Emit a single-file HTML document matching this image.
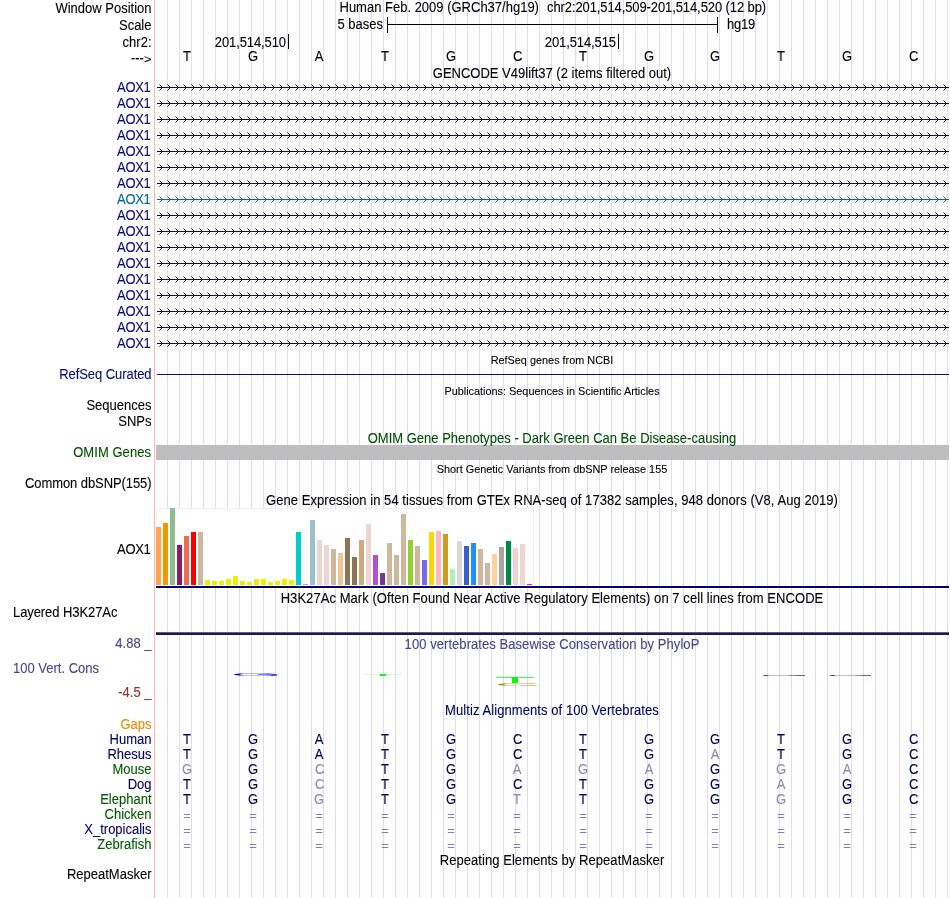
<!DOCTYPE html><html><head><meta charset="utf-8"><title>UCSC Genome Browser - chr2:201,514,509-201,514,520</title>
<style>
html,body{margin:0;padding:0;background:#fff;}
body{-webkit-text-stroke:0.1px;width:950px;height:898px;overflow:hidden;position:relative;font-family:"Liberation Sans",sans-serif;font-size:13px;color:#000;}
#g{position:absolute;left:0;top:0;}
.t{position:absolute;white-space:pre;line-height:16px;height:16px;transform:scaleY(1.07);transform-origin:0 12.5px;}
.r{text-align:right;left:0;width:151.5px;}
.c{text-align:center;left:155px;width:794px;}
.s{font-size:10.88px;transform-origin:0 11.8px;}
.nv{color:#0c0c78;}
.gr{color:#006400;}
.b{transform:scaleY(1.07);transform-origin:0 12.5px;position:absolute;width:20px;margin-left:-10px;text-align:center;line-height:15px;height:15px;white-space:pre;}
</style></head><body>
<svg id="g" width="950" height="898" viewBox="0 0 950 898" shape-rendering="crispEdges">
<defs>
<pattern id="cv" x="154" y="84" width="8" height="16" patternUnits="userSpaceOnUse"><g fill="#0c0c78"><rect x="5" y="0" width="1" height="1" opacity=".55"/><rect x="6" y="1" width="1" height="1"/><rect x="7" y="2" width="1" height="1"/><rect x="7" y="4" width="1" height="1"/><rect x="6" y="5" width="1" height="1"/><rect x="5" y="6" width="1" height="1" opacity=".55"/></g></pattern>
<pattern id="cv2" x="154" y="84" width="8" height="16" patternUnits="userSpaceOnUse"><g fill="#0764a8"><rect x="5" y="0" width="1" height="1" opacity=".55"/><rect x="6" y="1" width="1" height="1"/><rect x="7" y="2" width="1" height="1"/><rect x="7" y="4" width="1" height="1"/><rect x="6" y="5" width="1" height="1"/><rect x="5" y="6" width="1" height="1" opacity=".55"/></g></pattern>
</defs>
<path d="M167.5 0V898M179.5 0V898M191.5 0V898M203.5 0V898M215.5 0V898M227.5 0V898M239.5 0V898M251.5 0V898M263.5 0V898M275.5 0V898M287.5 0V898M299.5 0V898M311.5 0V898M323.5 0V898M335.5 0V898M347.5 0V898M359.5 0V898M371.5 0V898M383.5 0V898M395.5 0V898M407.5 0V898M419.5 0V898M431.5 0V898M443.5 0V898M455.5 0V898M467.5 0V898M479.5 0V898M491.5 0V898M503.5 0V898M515.5 0V898M527.5 0V898M539.5 0V898M551.5 0V898M563.5 0V898M575.5 0V898M587.5 0V898M599.5 0V898M611.5 0V898M623.5 0V898M635.5 0V898M647.5 0V898M659.5 0V898M671.5 0V898M683.5 0V898M695.5 0V898M707.5 0V898M719.5 0V898M731.5 0V898M743.5 0V898M755.5 0V898M767.5 0V898M779.5 0V898M791.5 0V898M803.5 0V898M815.5 0V898M827.5 0V898M839.5 0V898M851.5 0V898M863.5 0V898M875.5 0V898M887.5 0V898M899.5 0V898M911.5 0V898M923.5 0V898M935.5 0V898M947.5 0V898" stroke="#dcdcff" stroke-width="1" fill="none"/>
<rect x="154" y="0" width="1" height="898" fill="#ffb4b4"/>
<path d="M387.5 17V33M717.5 17V33M387 24.5H718" stroke="#000" stroke-width="1" fill="none"/>
<path d="M288.5 34V49M618.5 34V49" stroke="#000" stroke-width="1" fill="none"/>
<rect x="157" y="87" width="792" height="1" fill="#0c0c78"/>
<rect x="157" y="84" width="792" height="7" fill="url(#cv)" transform="translate(0,0)"/>
<rect x="157" y="103" width="792" height="1" fill="#0c0c78"/>
<rect x="157" y="100" width="792" height="7" fill="url(#cv)" transform="translate(0,0)"/>
<rect x="157" y="119" width="792" height="1" fill="#0c0c78"/>
<rect x="157" y="116" width="792" height="7" fill="url(#cv)" transform="translate(0,0)"/>
<rect x="157" y="135" width="792" height="1" fill="#0c0c78"/>
<rect x="157" y="132" width="792" height="7" fill="url(#cv)" transform="translate(0,0)"/>
<rect x="157" y="151" width="792" height="1" fill="#0c0c78"/>
<rect x="157" y="148" width="792" height="7" fill="url(#cv)" transform="translate(0,0)"/>
<rect x="157" y="167" width="792" height="1" fill="#0c0c78"/>
<rect x="157" y="164" width="792" height="7" fill="url(#cv)" transform="translate(0,0)"/>
<rect x="157" y="183" width="792" height="1" fill="#0c0c78"/>
<rect x="157" y="180" width="792" height="7" fill="url(#cv)" transform="translate(0,0)"/>
<rect x="157" y="199" width="792" height="1" fill="#0764a8"/>
<rect x="157" y="196" width="792" height="7" fill="url(#cv2)" transform="translate(0,0)"/>
<rect x="157" y="215" width="792" height="1" fill="#0c0c78"/>
<rect x="157" y="212" width="792" height="7" fill="url(#cv)" transform="translate(0,0)"/>
<rect x="157" y="231" width="792" height="1" fill="#0c0c78"/>
<rect x="157" y="228" width="792" height="7" fill="url(#cv)" transform="translate(0,0)"/>
<rect x="157" y="247" width="792" height="1" fill="#0c0c78"/>
<rect x="157" y="244" width="792" height="7" fill="url(#cv)" transform="translate(0,0)"/>
<rect x="157" y="263" width="792" height="1" fill="#0c0c78"/>
<rect x="157" y="260" width="792" height="7" fill="url(#cv)" transform="translate(0,0)"/>
<rect x="157" y="279" width="792" height="1" fill="#0c0c78"/>
<rect x="157" y="276" width="792" height="7" fill="url(#cv)" transform="translate(0,0)"/>
<rect x="157" y="295" width="792" height="1" fill="#0c0c78"/>
<rect x="157" y="292" width="792" height="7" fill="url(#cv)" transform="translate(0,0)"/>
<rect x="157" y="311" width="792" height="1" fill="#0c0c78"/>
<rect x="157" y="308" width="792" height="7" fill="url(#cv)" transform="translate(0,0)"/>
<rect x="157" y="327" width="792" height="1" fill="#0c0c78"/>
<rect x="157" y="324" width="792" height="7" fill="url(#cv)" transform="translate(0,0)"/>
<rect x="157" y="343" width="792" height="1" fill="#0c0c78"/>
<rect x="157" y="340" width="792" height="7" fill="url(#cv)" transform="translate(0,0)"/>
<rect x="157" y="374" width="792" height="1" fill="#0c0c78"/>
<rect x="156" y="445" width="793" height="15" fill="#bebebe"/>
<rect x="156" y="508" width="378" height="78" fill="#fff"/>
<path d="M156.5 585V508.5H533.5V585" stroke="#f0f0f0" stroke-width="1" fill="none"/>
<rect x="156" y="527" width="5" height="58" fill="#FFA54F"/>
<rect x="163" y="523" width="5" height="62" fill="#EE9A00"/>
<rect x="170" y="508" width="5" height="77" fill="#8FBC8F"/>
<rect x="177" y="545" width="5" height="40" fill="#8B1C62"/>
<rect x="184" y="536" width="5" height="49" fill="#EE6A50"/>
<rect x="191" y="532" width="5" height="53" fill="#FF0000"/>
<rect x="198" y="532" width="5" height="53" fill="#CDB79E"/>
<rect x="205" y="580" width="5" height="5" fill="#EEEE00"/>
<rect x="212" y="581" width="5" height="4" fill="#EEEE00"/>
<rect x="219" y="581" width="5" height="4" fill="#EEEE00"/>
<rect x="226" y="579" width="5" height="6" fill="#EEEE00"/>
<rect x="233" y="576" width="5" height="9" fill="#EEEE00"/>
<rect x="240" y="581" width="5" height="4" fill="#EEEE00"/>
<rect x="247" y="582" width="5" height="3" fill="#EEEE00"/>
<rect x="254" y="579" width="5" height="6" fill="#EEEE00"/>
<rect x="261" y="579" width="5" height="6" fill="#EEEE00"/>
<rect x="268" y="582" width="5" height="3" fill="#EEEE00"/>
<rect x="275" y="581" width="5" height="4" fill="#EEEE00"/>
<rect x="282" y="579" width="5" height="6" fill="#EEEE00"/>
<rect x="289" y="580" width="5" height="5" fill="#EEEE00"/>
<rect x="296" y="532" width="5" height="53" fill="#00CDCD"/>
<rect x="303" y="584" width="5" height="1" fill="#EE82EE"/>
<rect x="310" y="520" width="5" height="65" fill="#9AC0CD"/>
<rect x="317" y="540" width="5" height="45" fill="#EED5D2"/>
<rect x="324" y="545" width="5" height="40" fill="#EED5D2"/>
<rect x="331" y="549" width="5" height="36" fill="#CDB79E"/>
<rect x="338" y="553" width="5" height="32" fill="#EEC591"/>
<rect x="345" y="538" width="5" height="47" fill="#8B7355"/>
<rect x="352" y="557" width="5" height="28" fill="#8B7355"/>
<rect x="359" y="540" width="5" height="45" fill="#CDAA7D"/>
<rect x="366" y="524" width="5" height="61" fill="#EED5D2"/>
<rect x="373" y="555" width="5" height="30" fill="#B452CD"/>
<rect x="380" y="573" width="5" height="12" fill="#7A378B"/>
<rect x="387" y="543" width="5" height="42" fill="#CDB79E"/>
<rect x="394" y="555" width="5" height="30" fill="#CDB79E"/>
<rect x="401" y="514" width="5" height="71" fill="#CDB79E"/>
<rect x="408" y="540" width="5" height="45" fill="#9ACD32"/>
<rect x="415" y="546" width="5" height="39" fill="#CDB79E"/>
<rect x="422" y="560" width="5" height="25" fill="#7A67EE"/>
<rect x="429" y="532" width="5" height="53" fill="#FFD700"/>
<rect x="436" y="531" width="5" height="54" fill="#FFB6C1"/>
<rect x="443" y="534" width="5" height="51" fill="#CD9B1D"/>
<rect x="450" y="569" width="5" height="16" fill="#B4EEB4"/>
<rect x="457" y="541" width="5" height="44" fill="#D9D9D9"/>
<rect x="464" y="546" width="5" height="39" fill="#3A5FCD"/>
<rect x="471" y="543" width="5" height="42" fill="#1E90FF"/>
<rect x="478" y="549" width="5" height="36" fill="#CDB79E"/>
<rect x="485" y="563" width="5" height="22" fill="#CDB79E"/>
<rect x="492" y="554" width="5" height="31" fill="#FFD39B"/>
<rect x="499" y="547" width="5" height="38" fill="#A6A6A6"/>
<rect x="506" y="541" width="5" height="44" fill="#008B45"/>
<rect x="513" y="548" width="5" height="37" fill="#EED5D2"/>
<rect x="520" y="544" width="5" height="41" fill="#EED5D2"/>
<rect x="527" y="584" width="5" height="1" fill="#FF00FF"/>
<rect x="156" y="586" width="793" height="2" fill="#00006e"/>
<rect x="156" y="632" width="793" height="1" fill="#6e5a6e"/>
<rect x="156" y="633" width="793" height="2" fill="#191955"/>
</svg>
<svg id="lg" style="position:absolute;left:0;top:0;will-change:transform" width="950" height="898" viewBox="0 0 950 898">
<text transform="translate(230.48 676.16) scale(6.631 0.424)" font-family="Liberation Sans, sans-serif" font-size="10" fill="#0000ff" opacity="1">G</text>
<rect x="364" y="674" width="38" height="1" fill="#00ff00" opacity=".17"/><rect x="380" y="674" width="6" height="2" fill="#00ff00"/>
<text transform="translate(494.75 683.30) scale(6.608 0.916)" font-family="Liberation Sans, sans-serif" font-size="10" fill="#00ff00" opacity="1">T</text>
<text transform="translate(494.75 686.46) scale(6.382 0.395)" font-family="Liberation Sans, sans-serif" font-size="10" fill="#a09000" opacity="1">C</text>
<g fill="#0000ff"><rect x="762.5" y="675" width="42.5" height="1" opacity=".25"/><rect x="763.5" y="675" width="5" height="1" opacity=".5"/><rect x="765" y="675" width="2.5" height="1" opacity=".5"/><rect x="789" y="675" width="16" height="1" opacity=".3"/><rect x="795" y="675" width="10" height="1" opacity=".3"/></g>
<g fill="#0000ff"><rect x="829" y="675" width="42" height="1" opacity=".25"/><rect x="830" y="675" width="5" height="1" opacity=".5"/><rect x="831.5" y="675" width="2.5" height="1" opacity=".5"/><rect x="855" y="675" width="16" height="1" opacity=".3"/><rect x="861" y="675" width="10" height="1" opacity=".3"/></g>
</svg>
<div id="tx" style="position:absolute;left:0;top:0;width:950px;height:898px;will-change:transform">
<div class="t r" style="top:1px;">Window Position</div>
<div class="t r" style="top:18px;">Scale</div>
<div class="t r" style="top:35px;">chr2:</div>
<div class="t r" style="top:51px;">---<span style="display:inline-block;transform:scale(1,.8);transform-origin:100% 64%">&gt;</span></div>
<div class="t r nv" style="top:80px;left:-1px;letter-spacing:-0.3px;">AOX1</div>
<div class="t r nv" style="top:96px;left:-1px;letter-spacing:-0.3px;">AOX1</div>
<div class="t r nv" style="top:112px;left:-1px;letter-spacing:-0.3px;">AOX1</div>
<div class="t r nv" style="top:128px;left:-1px;letter-spacing:-0.3px;">AOX1</div>
<div class="t r nv" style="top:144px;left:-1px;letter-spacing:-0.3px;">AOX1</div>
<div class="t r nv" style="top:160px;left:-1px;letter-spacing:-0.3px;">AOX1</div>
<div class="t r nv" style="top:176px;left:-1px;letter-spacing:-0.3px;">AOX1</div>
<div class="t r" style="top:192px;left:-1px;letter-spacing:-0.3px;color:#0764a8;">AOX1</div>
<div class="t r nv" style="top:208px;left:-1px;letter-spacing:-0.3px;">AOX1</div>
<div class="t r nv" style="top:224px;left:-1px;letter-spacing:-0.3px;">AOX1</div>
<div class="t r nv" style="top:240px;left:-1px;letter-spacing:-0.3px;">AOX1</div>
<div class="t r nv" style="top:256px;left:-1px;letter-spacing:-0.3px;">AOX1</div>
<div class="t r nv" style="top:272px;left:-1px;letter-spacing:-0.3px;">AOX1</div>
<div class="t r nv" style="top:288px;left:-1px;letter-spacing:-0.3px;">AOX1</div>
<div class="t r nv" style="top:304px;left:-1px;letter-spacing:-0.3px;">AOX1</div>
<div class="t r nv" style="top:320px;left:-1px;letter-spacing:-0.3px;">AOX1</div>
<div class="t r nv" style="top:336px;left:-1px;letter-spacing:-0.3px;">AOX1</div>
<div class="t r nv" style="top:367px;letter-spacing:-0.07px;">RefSeq Curated</div>
<div class="t r" style="top:398px;">Sequences</div>
<div class="t r" style="top:414px;">SNPs</div>
<div class="t r" style="top:445px;color:#005000;left:-0.5px;letter-spacing:0.05px;">OMIM Genes</div>
<div class="t r" style="top:476px;letter-spacing:-0.08px;">Common dbSNP(155)</div>
<div class="t r" style="top:542px;left:-1px;letter-spacing:-0.3px;">AOX1</div>
<div class="t " style="top:605px;left:13px;letter-spacing:-0.08px;">Layered H3K27Ac</div>
<div class="t r" style="top:636px;color:#46468c;">4.88 _</div>
<div class="t " style="top:661px;left:13px;color:#46468c;">100 Vert. Cons</div>
<div class="t r" style="top:685px;color:#8c3232;">-4.5 _</div>
<div class="t r" style="top:717px;color:#e68c00;">Gaps</div>
<div class="t r" style="top:732px;color:#000064;">Human</div>
<div class="t r" style="top:747px;color:#000064;">Rhesus</div>
<div class="t r" style="top:762px;color:#005a00;">Mouse</div>
<div class="t r" style="top:777px;color:#000064;">Dog</div>
<div class="t r" style="top:792px;color:#005a00;">Elephant</div>
<div class="t r" style="top:807px;color:#005a00;">Chicken</div>
<div class="t r" style="top:822px;color:#000064;">X_tropicalis</div>
<div class="t r" style="top:837px;color:#005a00;">Zebrafish</div>
<div class="t r" style="top:867px;">RepeatMasker</div>
<div class="t " style="top:0px;left:339.5px;">Human Feb. 2009 (GRCh37/hg19)</div>
<div class="t " style="top:0px;left:547px;letter-spacing:-0.1px;">chr2:201,514,509-201,514,520 (12 bp)</div>
<div class="t " style="top:17px;left:283px;width:100px;text-align:right;">5 bases</div>
<div class="t " style="top:17px;left:727px;letter-spacing:-0.2px;">hg19</div>
<div class="t " style="top:35px;left:186px;width:100px;text-align:right;letter-spacing:-0.1px;">201,514,510</div>
<div class="t " style="top:35px;left:516px;width:100px;text-align:right;letter-spacing:-0.1px;">201,514,515</div>
<div class="b" style="left:187px;top:48.5px;line-height:16px;height:16px">T</div>
<div class="b" style="left:253px;top:48.5px;line-height:16px;height:16px">G</div>
<div class="b" style="left:319px;top:48.5px;line-height:16px;height:16px">A</div>
<div class="b" style="left:385px;top:48.5px;line-height:16px;height:16px">T</div>
<div class="b" style="left:451px;top:48.5px;line-height:16px;height:16px">G</div>
<div class="b" style="left:517.8px;top:48.5px;line-height:16px;height:16px">C</div>
<div class="b" style="left:583px;top:48.5px;line-height:16px;height:16px">T</div>
<div class="b" style="left:649px;top:48.5px;line-height:16px;height:16px">G</div>
<div class="b" style="left:715px;top:48.5px;line-height:16px;height:16px">G</div>
<div class="b" style="left:781px;top:48.5px;line-height:16px;height:16px">T</div>
<div class="b" style="left:847px;top:48.5px;line-height:16px;height:16px">G</div>
<div class="b" style="left:913.8px;top:48.5px;line-height:16px;height:16px">C</div>
<div class="t c" style="top:66px;">GENCODE V49lift37 (2 items filtered out)</div>
<div class="t c s" style="top:352px;">RefSeq genes from NCBI</div>
<div class="t c s" style="top:383px;">Publications: Sequences in Scientific Articles</div>
<div class="t c" style="top:431px;color:#005000;">OMIM Gene Phenotypes - Dark Green Can Be Disease-causing</div>
<div class="t c s" style="top:461px;">Short Genetic Variants from dbSNP release 155</div>
<div class="t c" style="top:493px;letter-spacing:0.05px;">Gene Expression in 54 tissues from GTEx RNA-seq of 17382 samples, 948 donors (V8, Aug 2019)</div>
<div class="t c" style="top:591px;letter-spacing:0.06px;">H3K27Ac Mark (Often Found Near Active Regulatory Elements) on 7 cell lines from ENCODE</div>
<div class="t c" style="top:637px;color:#46468c;letter-spacing:0.06px;">100 vertebrates Basewise Conservation by PhyloP</div>
<div class="t c" style="top:703px;color:#000064;letter-spacing:0.08px;">Multiz Alignments of 100 Vertebrates</div>
<div class="t c" style="top:853px;letter-spacing:0.06px;">Repeating Elements by RepeatMasker</div>
<div class="b" style="left:187px;top:732px;line-height:16px;height:16px;color:#00005a;">T</div>
<div class="b" style="left:253px;top:732px;line-height:16px;height:16px;color:#00005a;">G</div>
<div class="b" style="left:319px;top:732px;line-height:16px;height:16px;color:#00005a;">A</div>
<div class="b" style="left:385px;top:732px;line-height:16px;height:16px;color:#00005a;">T</div>
<div class="b" style="left:451px;top:732px;line-height:16px;height:16px;color:#00005a;">G</div>
<div class="b" style="left:517.8px;top:732px;line-height:16px;height:16px;color:#00005a;">C</div>
<div class="b" style="left:583px;top:732px;line-height:16px;height:16px;color:#00005a;">T</div>
<div class="b" style="left:649px;top:732px;line-height:16px;height:16px;color:#00005a;">G</div>
<div class="b" style="left:715px;top:732px;line-height:16px;height:16px;color:#00005a;">G</div>
<div class="b" style="left:781px;top:732px;line-height:16px;height:16px;color:#00005a;">T</div>
<div class="b" style="left:847px;top:732px;line-height:16px;height:16px;color:#00005a;">G</div>
<div class="b" style="left:913.8px;top:732px;line-height:16px;height:16px;color:#00005a;">C</div>
<div class="b" style="left:187px;top:747px;line-height:16px;height:16px;color:#00005a;">T</div>
<div class="b" style="left:253px;top:747px;line-height:16px;height:16px;color:#00005a;">G</div>
<div class="b" style="left:319px;top:747px;line-height:16px;height:16px;color:#00005a;">A</div>
<div class="b" style="left:385px;top:747px;line-height:16px;height:16px;color:#00005a;">T</div>
<div class="b" style="left:451px;top:747px;line-height:16px;height:16px;color:#00005a;">G</div>
<div class="b" style="left:517.8px;top:747px;line-height:16px;height:16px;color:#00005a;">C</div>
<div class="b" style="left:583px;top:747px;line-height:16px;height:16px;color:#00005a;">T</div>
<div class="b" style="left:649px;top:747px;line-height:16px;height:16px;color:#00005a;">G</div>
<div class="b" style="left:715px;top:747px;line-height:16px;height:16px;color:#8c8cb4;">A</div>
<div class="b" style="left:781px;top:747px;line-height:16px;height:16px;color:#00005a;">T</div>
<div class="b" style="left:847px;top:747px;line-height:16px;height:16px;color:#00005a;">G</div>
<div class="b" style="left:913.8px;top:747px;line-height:16px;height:16px;color:#00005a;">C</div>
<div class="b" style="left:187px;top:762px;line-height:16px;height:16px;color:#8c8cb4;">G</div>
<div class="b" style="left:253px;top:762px;line-height:16px;height:16px;color:#00005a;">G</div>
<div class="b" style="left:319.8px;top:762px;line-height:16px;height:16px;color:#8c8cb4;">C</div>
<div class="b" style="left:385px;top:762px;line-height:16px;height:16px;color:#00005a;">T</div>
<div class="b" style="left:451px;top:762px;line-height:16px;height:16px;color:#00005a;">G</div>
<div class="b" style="left:517px;top:762px;line-height:16px;height:16px;color:#8c8cb4;">A</div>
<div class="b" style="left:583px;top:762px;line-height:16px;height:16px;color:#8c8cb4;">G</div>
<div class="b" style="left:649px;top:762px;line-height:16px;height:16px;color:#8c8cb4;">A</div>
<div class="b" style="left:715px;top:762px;line-height:16px;height:16px;color:#00005a;">G</div>
<div class="b" style="left:781px;top:762px;line-height:16px;height:16px;color:#8c8cb4;">G</div>
<div class="b" style="left:847px;top:762px;line-height:16px;height:16px;color:#8c8cb4;">A</div>
<div class="b" style="left:913.8px;top:762px;line-height:16px;height:16px;color:#00005a;">C</div>
<div class="b" style="left:187px;top:777px;line-height:16px;height:16px;color:#00005a;">T</div>
<div class="b" style="left:253px;top:777px;line-height:16px;height:16px;color:#00005a;">G</div>
<div class="b" style="left:319.8px;top:777px;line-height:16px;height:16px;color:#8c8cb4;">C</div>
<div class="b" style="left:385px;top:777px;line-height:16px;height:16px;color:#00005a;">T</div>
<div class="b" style="left:451px;top:777px;line-height:16px;height:16px;color:#00005a;">G</div>
<div class="b" style="left:517.8px;top:777px;line-height:16px;height:16px;color:#00005a;">C</div>
<div class="b" style="left:583px;top:777px;line-height:16px;height:16px;color:#00005a;">T</div>
<div class="b" style="left:649px;top:777px;line-height:16px;height:16px;color:#00005a;">G</div>
<div class="b" style="left:715px;top:777px;line-height:16px;height:16px;color:#00005a;">G</div>
<div class="b" style="left:781px;top:777px;line-height:16px;height:16px;color:#8c8cb4;">A</div>
<div class="b" style="left:847px;top:777px;line-height:16px;height:16px;color:#00005a;">G</div>
<div class="b" style="left:913.8px;top:777px;line-height:16px;height:16px;color:#00005a;">C</div>
<div class="b" style="left:187px;top:792px;line-height:16px;height:16px;color:#00005a;">T</div>
<div class="b" style="left:253px;top:792px;line-height:16px;height:16px;color:#00005a;">G</div>
<div class="b" style="left:319px;top:792px;line-height:16px;height:16px;color:#8c8cb4;">G</div>
<div class="b" style="left:385px;top:792px;line-height:16px;height:16px;color:#00005a;">T</div>
<div class="b" style="left:451px;top:792px;line-height:16px;height:16px;color:#00005a;">G</div>
<div class="b" style="left:517px;top:792px;line-height:16px;height:16px;color:#8c8cb4;">T</div>
<div class="b" style="left:583px;top:792px;line-height:16px;height:16px;color:#00005a;">T</div>
<div class="b" style="left:649px;top:792px;line-height:16px;height:16px;color:#00005a;">G</div>
<div class="b" style="left:715px;top:792px;line-height:16px;height:16px;color:#00005a;">G</div>
<div class="b" style="left:781px;top:792px;line-height:16px;height:16px;color:#8c8cb4;">G</div>
<div class="b" style="left:847px;top:792px;line-height:16px;height:16px;color:#00005a;">G</div>
<div class="b" style="left:913.8px;top:792px;line-height:16px;height:16px;color:#00005a;">C</div>
<div class="b" style="left:187px;top:808px;line-height:16px;height:16px;color:#8080b8;transform:scaleY(.95);transform-origin:0 8.2px;">=</div>
<div class="b" style="left:253px;top:808px;line-height:16px;height:16px;color:#8080b8;transform:scaleY(.95);transform-origin:0 8.2px;">=</div>
<div class="b" style="left:319px;top:808px;line-height:16px;height:16px;color:#8080b8;transform:scaleY(.95);transform-origin:0 8.2px;">=</div>
<div class="b" style="left:385px;top:808px;line-height:16px;height:16px;color:#8080b8;transform:scaleY(.95);transform-origin:0 8.2px;">=</div>
<div class="b" style="left:451px;top:808px;line-height:16px;height:16px;color:#8080b8;transform:scaleY(.95);transform-origin:0 8.2px;">=</div>
<div class="b" style="left:517px;top:808px;line-height:16px;height:16px;color:#8080b8;transform:scaleY(.95);transform-origin:0 8.2px;">=</div>
<div class="b" style="left:583px;top:808px;line-height:16px;height:16px;color:#8080b8;transform:scaleY(.95);transform-origin:0 8.2px;">=</div>
<div class="b" style="left:649px;top:808px;line-height:16px;height:16px;color:#8080b8;transform:scaleY(.95);transform-origin:0 8.2px;">=</div>
<div class="b" style="left:715px;top:808px;line-height:16px;height:16px;color:#8080b8;transform:scaleY(.95);transform-origin:0 8.2px;">=</div>
<div class="b" style="left:781px;top:808px;line-height:16px;height:16px;color:#8080b8;transform:scaleY(.95);transform-origin:0 8.2px;">=</div>
<div class="b" style="left:847px;top:808px;line-height:16px;height:16px;color:#8080b8;transform:scaleY(.95);transform-origin:0 8.2px;">=</div>
<div class="b" style="left:913px;top:808px;line-height:16px;height:16px;color:#8080b8;transform:scaleY(.95);transform-origin:0 8.2px;">=</div>
<div class="b" style="left:187px;top:823px;line-height:16px;height:16px;color:#8080b8;transform:scaleY(.95);transform-origin:0 8.2px;">=</div>
<div class="b" style="left:253px;top:823px;line-height:16px;height:16px;color:#8080b8;transform:scaleY(.95);transform-origin:0 8.2px;">=</div>
<div class="b" style="left:319px;top:823px;line-height:16px;height:16px;color:#8080b8;transform:scaleY(.95);transform-origin:0 8.2px;">=</div>
<div class="b" style="left:385px;top:823px;line-height:16px;height:16px;color:#8080b8;transform:scaleY(.95);transform-origin:0 8.2px;">=</div>
<div class="b" style="left:451px;top:823px;line-height:16px;height:16px;color:#8080b8;transform:scaleY(.95);transform-origin:0 8.2px;">=</div>
<div class="b" style="left:517px;top:823px;line-height:16px;height:16px;color:#8080b8;transform:scaleY(.95);transform-origin:0 8.2px;">=</div>
<div class="b" style="left:583px;top:823px;line-height:16px;height:16px;color:#8080b8;transform:scaleY(.95);transform-origin:0 8.2px;">=</div>
<div class="b" style="left:649px;top:823px;line-height:16px;height:16px;color:#8080b8;transform:scaleY(.95);transform-origin:0 8.2px;">=</div>
<div class="b" style="left:715px;top:823px;line-height:16px;height:16px;color:#8080b8;transform:scaleY(.95);transform-origin:0 8.2px;">=</div>
<div class="b" style="left:781px;top:823px;line-height:16px;height:16px;color:#8080b8;transform:scaleY(.95);transform-origin:0 8.2px;">=</div>
<div class="b" style="left:847px;top:823px;line-height:16px;height:16px;color:#8080b8;transform:scaleY(.95);transform-origin:0 8.2px;">=</div>
<div class="b" style="left:913px;top:823px;line-height:16px;height:16px;color:#8080b8;transform:scaleY(.95);transform-origin:0 8.2px;">=</div>
<div class="b" style="left:187px;top:838px;line-height:16px;height:16px;color:#8080b8;transform:scaleY(.95);transform-origin:0 8.2px;">=</div>
<div class="b" style="left:253px;top:838px;line-height:16px;height:16px;color:#8080b8;transform:scaleY(.95);transform-origin:0 8.2px;">=</div>
<div class="b" style="left:319px;top:838px;line-height:16px;height:16px;color:#8080b8;transform:scaleY(.95);transform-origin:0 8.2px;">=</div>
<div class="b" style="left:385px;top:838px;line-height:16px;height:16px;color:#8080b8;transform:scaleY(.95);transform-origin:0 8.2px;">=</div>
<div class="b" style="left:451px;top:838px;line-height:16px;height:16px;color:#8080b8;transform:scaleY(.95);transform-origin:0 8.2px;">=</div>
<div class="b" style="left:517px;top:838px;line-height:16px;height:16px;color:#8080b8;transform:scaleY(.95);transform-origin:0 8.2px;">=</div>
<div class="b" style="left:583px;top:838px;line-height:16px;height:16px;color:#8080b8;transform:scaleY(.95);transform-origin:0 8.2px;">=</div>
<div class="b" style="left:649px;top:838px;line-height:16px;height:16px;color:#8080b8;transform:scaleY(.95);transform-origin:0 8.2px;">=</div>
<div class="b" style="left:715px;top:838px;line-height:16px;height:16px;color:#8080b8;transform:scaleY(.95);transform-origin:0 8.2px;">=</div>
<div class="b" style="left:781px;top:838px;line-height:16px;height:16px;color:#8080b8;transform:scaleY(.95);transform-origin:0 8.2px;">=</div>
<div class="b" style="left:847px;top:838px;line-height:16px;height:16px;color:#8080b8;transform:scaleY(.95);transform-origin:0 8.2px;">=</div>
<div class="b" style="left:913px;top:838px;line-height:16px;height:16px;color:#8080b8;transform:scaleY(.95);transform-origin:0 8.2px;">=</div>
</div>
</body></html>
